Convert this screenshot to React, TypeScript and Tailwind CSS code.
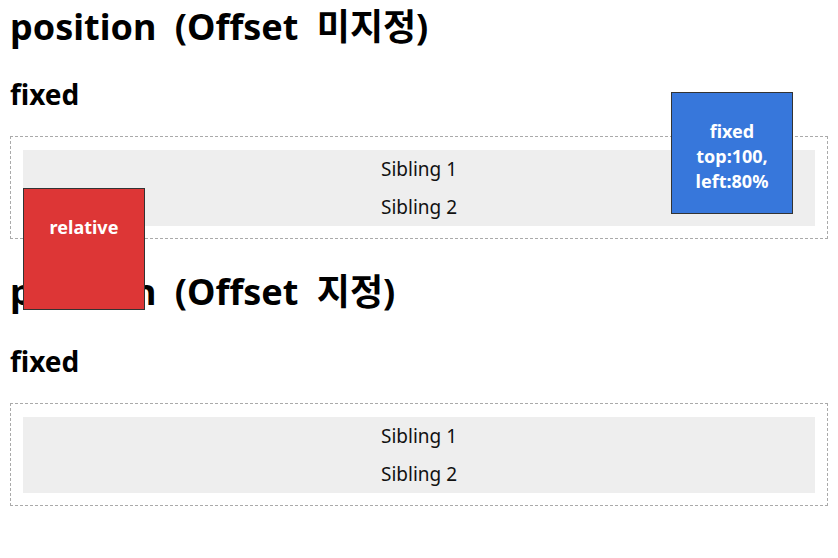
import React from 'react';

const font = { fontFamily: '"Noto Sans", "Noto Sans CJK KR", sans-serif' };

const Siblings: React.FC = () => (
    <div className="border border-dashed border-[#aaaaaa] px-[12px] pt-[13px] pb-[12px]">
        <div className="bg-[#eeeeee] text-center text-[19px] text-[#111]">
            <div className="h-[38px] leading-[38px]">Sibling 1</div>
            <div className="h-[38px] leading-[38px]">Sibling 2</div>
        </div>
    </div>
);

export default function App() {
    return (
        <div className="relative w-[838px] h-[558px] overflow-hidden bg-white px-[10px] text-black" style={font}>
            <h1 className="pt-[5px] text-[36px] font-bold leading-[44px] [word-spacing:9px]">position (Offset 미지정)</h1>
            <h2 className="mt-[28px] text-[28px] font-bold leading-[34px]">fixed</h2>
            <div className="mt-[25px]">
                <Siblings />
            </div>

            <h1 className="mt-[31px] text-[36px] font-bold leading-[44px] [word-spacing:9px]">position (Offset 지정)</h1>
            <h2 className="mt-[30px] text-[28px] font-bold leading-[34px]">fixed</h2>
            <div className="mt-[25px]">
                <Siblings />
            </div>

            <div className="absolute left-[23px] top-[188px] w-[122px] h-[122px] border border-[#333] bg-[#dd3636] pt-[26px] text-center text-[18px] font-bold leading-[25px] text-white">
                relative
            </div>
            <div className="absolute left-[671px] top-[92px] w-[122px] h-[122px] border border-[#333] bg-[#3777db] pt-[26px] text-center text-[18px] font-bold leading-[25px] text-white">
                fixed
                <br />
                top:100,
                <br />
                left:80%
            </div>
        </div>
    );
}
